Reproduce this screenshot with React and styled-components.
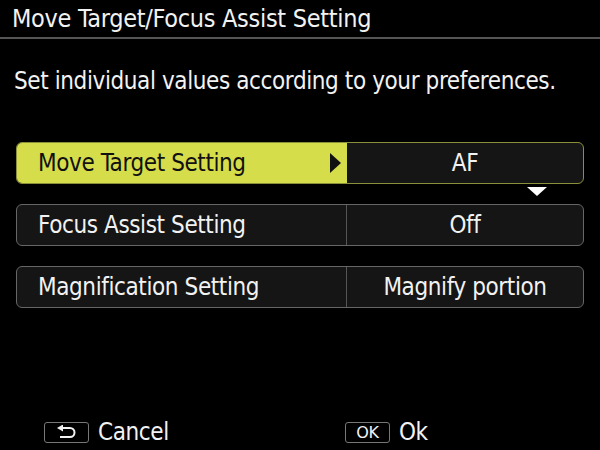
import React from 'react';
import styled, { createGlobalStyle } from 'styled-components';

const GlobalStyle = createGlobalStyle`
  html, body {
    margin: 0;
    padding: 0;
    background: #000;
  }
  * {
    box-sizing: border-box;
  }
  body {
    font-family: "DejaVu Sans Condensed", "DejaVu Sans", Roboto, sans-serif;
    font-stretch: condensed;
    color: #f2f2f2;
  }
`;

const Screen = styled.div`
  width: 600px;
  height: 450px;
  background: #000;
  display: flex;
  flex-direction: column;
  overflow: hidden;
`;

const Header = styled.div`
  height: 39px;
  border-bottom: 2px solid #555;
  padding-left: 12px;
  display: flex;
  align-items: center;
  font-size: 25px;
  letter-spacing: -0.3px;
`;

const Subtitle = styled.div`
  margin-top: 28px;
  padding-left: 14px;
  font-size: 24px;
  letter-spacing: -0.4px;
`;

const List = styled.div`
  margin-top: 47px;
  padding: 0 16px;
  display: flex;
  flex-direction: column;
  gap: 20px;
`;

const Row = styled.div`
  position: relative;
  height: 42px;
  display: grid;
  grid-template-columns: 330px 1fr;
  border: 1.5px solid ${p => (p.active ? '#8a8f3a' : '#666')};
  border-radius: 6px;
  background: #151515;
`;

const Label = styled.div`
  display: flex;
  align-items: center;
  justify-content: space-between;
  padding: 0 6px 0 21px;
  font-size: 24px;
  letter-spacing: -0.4px;
  border-radius: 5px 0 0 5px;
  background: ${p => (p.active ? '#d6dd4a' : 'transparent')};
  color: ${p => (p.active ? '#111' : '#f2f2f2')};
  border-right: ${p => (p.active ? 'none' : '1px solid #555')};
`;

const Value = styled.div`
  display: flex;
  align-items: center;
  justify-content: center;
  font-size: 24px;
  letter-spacing: -0.4px;
`;

const RightArrow = styled.span`
  width: 0;
  height: 0;
  border-top: 10px solid transparent;
  border-bottom: 10px solid transparent;
  border-left: 11px solid #111;
`;

const DownArrow = styled.span`
  position: absolute;
  right: 36px;
  bottom: -13px;
  width: 0;
  height: 0;
  border-left: 10px solid transparent;
  border-right: 10px solid transparent;
  border-top: 9px solid #fff;
`;

const Footer = styled.div`
  margin-top: auto;
  margin-bottom: 4px;
  padding-left: 44px;
  display: grid;
  grid-template-columns: 301px 1fr;
  align-items: center;
`;

const Action = styled.div`
  display: flex;
  align-items: center;
  gap: 9px;
  font-size: 24px;
  letter-spacing: -0.4px;
`;

const Key = styled.span`
  width: 45px;
  height: 21px;
  border: 1.5px solid #777;
  border-radius: 3px;
  display: flex;
  align-items: center;
  justify-content: center;
  font-family: "DejaVu Sans", sans-serif;
  font-stretch: normal;
  font-size: 16px;
  color: #f2f2f2;
`;

const BackIcon = () => (
  <svg width="24" height="14" viewBox="0 0 24 14">
    <path d="M6 3 H15 A4.5 4.5 0 0 1 15 12 H5" fill="none" stroke="#f2f2f2" strokeWidth="2" />
    <path d="M2 3 L8 -0.5 L8 6.5 Z" fill="#f2f2f2" />
  </svg>
);

const rows = [
  { label: 'Move Target Setting', value: 'AF', active: true },
  { label: 'Focus Assist Setting', value: 'Off' },
  { label: 'Magnification Setting', value: 'Magnify portion' },
];

export default function App() {
  return (
    <Screen>
      <GlobalStyle />
      <Header>Move Target/Focus Assist Setting</Header>
      <Subtitle>Set individual values according to your preferences.</Subtitle>
      <List>
        {rows.map(r => (
          <Row key={r.label} active={r.active}>
            <Label active={r.active}>
              {r.label}
              {r.active && <RightArrow />}
            </Label>
            <Value>{r.value}</Value>
            {r.active && <DownArrow />}
          </Row>
        ))}
      </List>
      <Footer>
        <Action>
          <Key><BackIcon /></Key>
          Cancel
        </Action>
        <Action>
          <Key>OK</Key>
          Ok
        </Action>
      </Footer>
    </Screen>
  );
}
